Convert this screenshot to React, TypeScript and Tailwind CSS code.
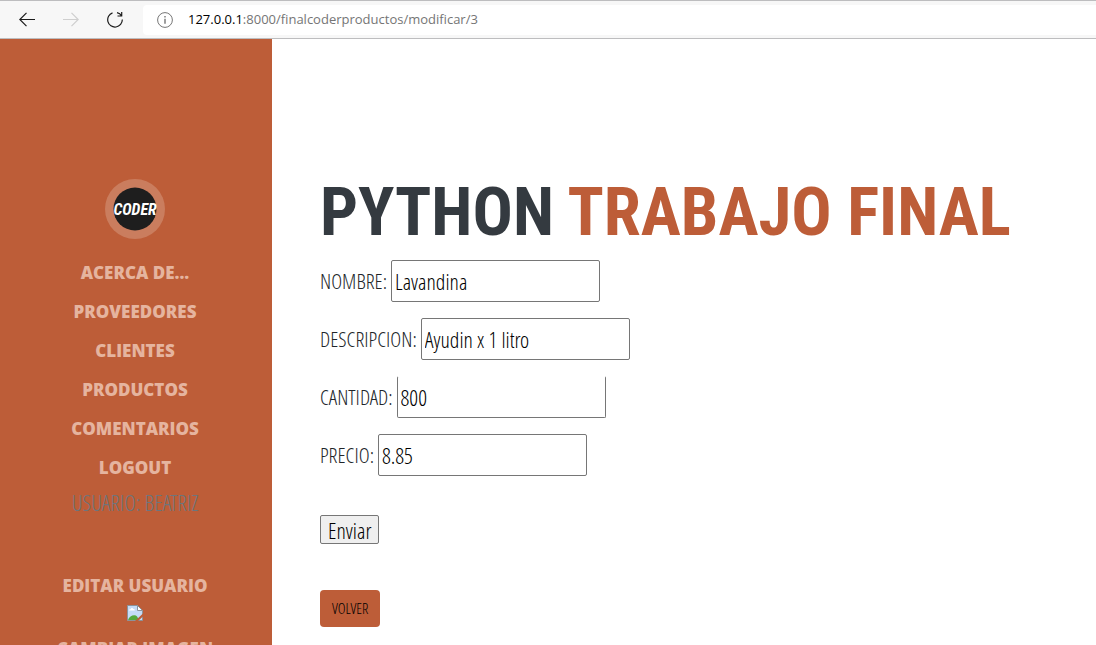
import React from "react";

const titleFont = "font-['Roboto_Condensed','Liberation_Sans_Narrow',sans-serif]";
const bodyFont =
  "font-['Open_Sans_Condensed_Light','Roboto_Condensed','Liberation_Sans_Narrow',sans-serif]";

const mainLinks = ["Acerca de...", "Proveedores", "Clientes", "Productos", "Comentarios", "Logout"];

function BrowserBar() {
  return (
    <header className="flex h-[39px] shrink-0 items-center border-y border-[#bdbdbf] bg-[#f7f7f7] pl-[19px]">
      <button type="button" aria-label="Back" className="mr-7 size-4 text-[#1b1b1b]">
        <svg viewBox="0 0 16 16" className="size-4" fill="none" stroke="currentColor" strokeWidth="1.2">
          <path d="M16 7.500H1M7.500.8.8 7.500l6.700 6.700" />
        </svg>
      </button>
      <button type="button" aria-label="Forward" disabled className="mr-7 size-4 text-[#cfcfcf]">
        <svg viewBox="0 0 16 16" className="size-4" fill="none" stroke="currentColor" strokeWidth="1.2">
          <path d="M0 7.500h15M8.500.8l6.700 6.700-6.700 6.700" />
        </svg>
      </button>
      <button type="button" aria-label="Refresh" className="mr-5 size-4 text-[#1b1b1b]">
        <svg viewBox="0 0 16 16" className="size-4" fill="none" stroke="currentColor" strokeWidth="1.2">
          <path d="M5.500.9A7.300 7.300 0 1 0 15.300 7.500M10.500 4h4.200V0M14.700 4A7.400 7.400 0 0 0 10 .7" />
        </svg>
      </button>
      <div className="flex h-[30px] flex-1 items-center rounded-l bg-white pl-3.5">
        <svg viewBox="0 0 16 16" className="mr-[15px] size-4 text-[#767676]" fill="none" stroke="currentColor">
          <circle cx="8" cy="8" r="7.4" />
          <path d="M8 6.8v5M8 4v1.5" strokeWidth="1.4" />
        </svg>
        <p className="font-['Open_Sans','Noto_Sans',sans-serif] text-[13px] text-[#757575]">
          <span className="text-black">127.0.0.1</span>:8000/finalcoderproductos/modificar/3
        </p>
      </div>
    </header>
  );
}

function Logo() {
  return (
    <div className="flex size-[60px] shrink-0 items-center justify-center rounded-full bg-[#ca7d5e]">
      <svg viewBox="0 0 44 44" className="size-11" role="img" aria-label="Coder">
        <circle cx="22" cy="22" r="21.5" fill="#1e1e1e" />
        <text
          x="22"
          y="28"
          textAnchor="middle"
          fontFamily="Roboto Condensed, sans-serif"
          fontSize="16"
          fontStyle="italic"
          fontWeight="700"
          fill="#fff"
        >
          CODER
        </text>
      </svg>
    </div>
  );
}

function BrokenImage() {
  return (
    <svg viewBox="0 0 16 16" className="size-4" role="img" aria-label="Avatar">
      <path d="M.5.5h10l5 5v10H.5z" fill="#c5dcf7" stroke="#8b939b" />
      <path d="M10.5.5v5h5z" fill="#fff" stroke="#8b939b" />
      <path d="M2 5.5c0-1 1-1.4 1.6-1.2C4 2.700 6 2.700 6.300 4.100c1-.1 1.500.5 1.500 1.400z" fill="#fff" />
      <path d="M1 15c1-3 4-5 6.500-4.800C9.500 10.300 11 12 11.500 15z" fill="#55a93b" />
      <path d="M16 8.500 8 16h3l5-4.500z" fill="#bd5d38" />
    </svg>
  );
}

function NavLink({ children }: { children: React.ReactNode }) {
  return (
    <a href="#" className="block text-center text-[17px] leading-6 font-extrabold text-[#e5b49f] uppercase">
      {children}
    </a>
  );
}

function Sidebar() {
  return (
    <nav className="flex w-[272px] shrink-0 flex-col items-center overflow-hidden bg-[#bd5d38] pt-[140px] pr-0.5 font-['Open_Sans','Noto_Sans',sans-serif]">
      <Logo />
      <ul className="mt-[22px] flex flex-col gap-[15px]">
        {mainLinks.map((label) => (
          <li key={label}>
            <NavLink>{label}</NavLink>
          </li>
        ))}
      </ul>
      <p className={`${bodyFont} mt-[6px] text-[22px] leading-8 text-[#6c757d] uppercase`}>Usuario: Beatriz</p>
      <div className="mt-14 flex flex-col items-center">
        <NavLink>Editar usuario</NavLink>
        <div className="mt-[7px] mb-4">
          <BrokenImage />
        </div>
        <NavLink>Cambiar imagen</NavLink>
      </div>
    </nav>
  );
}

type FieldProps = { id: string; label: string; value: string; open?: boolean };

function Field({ id, label, value, open }: FieldProps) {
  return (
    <div className="flex items-center gap-1">
      <label htmlFor={id} className="text-[21px] leading-8 text-[#212529] uppercase">
        {label}:
      </label>
      <input
        id={id}
        defaultValue={value}
        className={`h-[42px] w-[209px] rounded-xs border border-[#767676] bg-white px-[3px] text-[22px] leading-8 text-black ${open ? "border-t-white" : ""}`}
      />
    </div>
  );
}

export default function App() {
  return (
    <div className="flex h-screen flex-col overflow-hidden bg-white">
      <BrowserBar />
      <div className="flex min-h-0 flex-1">
        <Sidebar />
        <main className={`${bodyFont} flex-1 px-12 pt-[126px]`}>
          <h1 className={`${titleFont} text-[67px] leading-[95px] font-bold whitespace-nowrap text-[#343a40] uppercase`}>
            Python <span className="text-[#bd5d38]">Trabajo Final</span>
          </h1>
          <form className="flex flex-col items-start gap-4">
            <Field id="nombre" label="Nombre" value="Lavandina" />
            <Field id="descripcion" label="Descripcion" value="Ayudin x 1 litro" />
            <Field id="cantidad" label="Cantidad" value="800" open />
            <Field id="precio" label="Precio" value="8.85" />
            <button
              type="button"
              className="mt-[23px] h-[29px] rounded-xs border border-[#767676] bg-[#efefef] px-[7px] text-[22px] leading-6 text-black"
            >
              Enviar
            </button>
          </form>
          <a
            href="#"
            className="mt-[46px] inline-block rounded bg-[#bd5d38] px-3 py-[7px] text-[15px] leading-[23px] text-black uppercase"
          >
            Volver
          </a>
        </main>
      </div>
    </div>
  );
}
